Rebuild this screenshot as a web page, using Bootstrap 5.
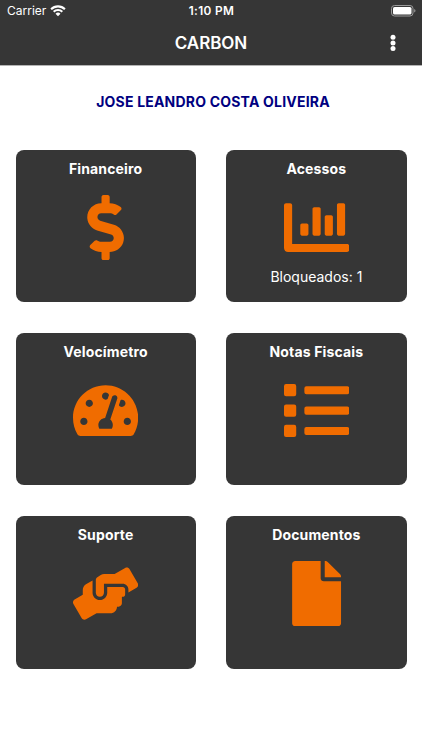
<!DOCTYPE html>
<html lang="pt-BR">
<head>
<meta charset="utf-8">
<meta name="viewport" content="width=device-width, initial-scale=1">
<title>CARBON</title>
<link href="https://cdn.jsdelivr.net/npm/bootstrap@5.3.0/dist/css/bootstrap.min.css" rel="stylesheet">
<style>
  body { font-family: Inter, "Liberation Sans", sans-serif; background: #fff; height: 750px; overflow: hidden; }
  .app-header { background: #363636; height: 66px; border-bottom: 1px solid #b4b4b4; }
  .status-bar { height: 22px; font-size: 12px; line-height: 22px; padding: 0 6px 0 7px; }
  .status-time { font-weight: 600; font-size: 11.8px; letter-spacing: .35px; }
  .title-bar { height: 42px; padding: 0 20px; }
  .app-title { font-size: 17px; font-weight: 600; line-height: 42px; letter-spacing: -.05px; }
  .user-name { color: #000080; font-size: 14px; font-weight: 700; line-height: 20px; letter-spacing: .2px; margin: 26px 0 37.5px; padding-left: 4px; }
  .tile-grid { padding: 0 15.5px; }
  .tiles { display: grid; grid-template-columns: 1fr 1fr; gap: 30.8px 30.6px; }
  .tile { background: #363636; border-radius: 8px; height: 152.5px; padding-top: 9px; }
  .tile-title { font-size: 14px; font-weight: 700; line-height: 20px; letter-spacing: .15px; margin-bottom: 16.2px; }
  .tile-icon { width: 65.2px; height: 65.2px; fill: #f06c00; }
  .tile-note { font-size: 14px; line-height: 20px; margin-top: 7.6px; }
</style>
</head>
<body>
<header class="app-header text-white">
  <div class="status-bar row g-0 align-items-center">
    <div class="col d-flex align-items-center gap-1">
      <span class="carrier">Carrier</span>
      <svg width="16" height="12" viewBox="0 0 16 12" fill="none" stroke="#fff" stroke-width="2.1">
        <path d="M1.1 4.2a9.8 9.8 0 0 1 13.8 0M3.7 6.8a6.1 6.1 0 0 1 8.6 0"/>
        <path d="M8 11.2 5.5 8.7a3.6 3.6 0 0 1 5 0z" fill="#fff" stroke="none"/>
      </svg>
    </div>
    <div class="col-auto status-time">1:10 PM</div>
    <div class="col d-flex justify-content-end">
      <svg width="26" height="12" viewBox="0 0 26 12">
        <rect x="1.5" y=".5" width="21.5" height="10.5" rx="3" fill="none" stroke="#999"/>
        <rect x="3" y="2" width="18.5" height="7.5" rx="1.6" fill="#fff"/>
        <path d="M24.2 4v3.6q1.3-.5 1.3-1.8T24.2 4z" fill="#999"/>
      </svg>
    </div>
  </div>
  <div class="title-bar row g-0 align-items-center">
    <div class="col"></div>
    <h1 class="app-title col-auto m-0">CARBON</h1>
    <div class="col d-flex justify-content-end">
      <svg width="18" height="18" viewBox="0 0 18 18" fill="#fff"><circle cx="9" cy="3.2" r="2.5"/><circle cx="9" cy="8.9" r="2.5"/><circle cx="9" cy="14.6" r="2.5"/></svg>
    </div>
  </div>
</header>
<main>
  <h2 class="user-name text-center">JOSE LEANDRO COSTA OLIVEIRA</h2>
  <div class="tile-grid">
    <div class="tiles text-white text-center">
      <section class="tile">
        <h3 class="tile-title">Financeiro</h3>
        <svg class="tile-icon" viewBox="0 0 288 512"><path d="M209.2 233.4l-108-31.6C88.7 198.2 80 186.5 80 173.5c0-16.3 13.2-29.5 29.5-29.5h66.3c12.2 0 24.2 3.7 34.2 10.5 6.1 4.1 14.3 3.1 19.5-2l34.8-34c7.1-6.9 6.1-18.4-1.8-24.5C238 74.8 207.4 64.1 176 64V16c0-8.8-7.2-16-16-16h-32c-8.8 0-16 7.2-16 16v48h-2.5C45.8 64-5.4 118.7.5 183.6c4.2 46.1 39.4 83.6 83.8 96.6l102.5 30c12.5 3.7 21.2 15.3 21.2 28.3 0 16.3-13.2 29.5-29.5 29.5h-66.3C100 368 88 364.3 78 357.5c-6.1-4.1-14.3-3.1-19.5 2l-34.8 34c-7.1 6.9-6.1 18.4 1.8 24.5 24.5 19.2 55.1 29.9 86.5 30v48c0 8.8 7.2 16 16 16h32c8.8 0 16-7.2 16-16v-48.2c46.6-.9 90.3-28.6 105.7-72.7 21.5-61.6-14.6-124.8-72.5-141.7z"/></svg>
      </section>
      <section class="tile">
        <h3 class="tile-title">Acessos</h3>
        <svg class="tile-icon" viewBox="0 0 512 512"><path d="M332.8 320h38.4c6.4 0 12.8-6.4 12.8-12.8V172.8c0-6.4-6.4-12.8-12.8-12.8h-38.4c-6.4 0-12.8 6.4-12.8 12.8v134.4c0 6.4 6.4 12.8 12.8 12.8zm96 0h38.4c6.4 0 12.8-6.4 12.8-12.8V76.8c0-6.4-6.4-12.8-12.8-12.8h-38.4c-6.4 0-12.8 6.4-12.8 12.8v230.4c0 6.4 6.4 12.8 12.8 12.8zm-288 0h38.4c6.4 0 12.8-6.4 12.8-12.8v-70.4c0-6.4-6.4-12.8-12.8-12.8h-38.4c-6.4 0-12.8 6.4-12.8 12.8v70.4c0 6.4 6.4 12.8 12.8 12.8zm96 0h38.4c6.4 0 12.8-6.4 12.8-12.8V108.8c0-6.4-6.4-12.8-12.8-12.8h-38.4c-6.4 0-12.8 6.4-12.8 12.8v198.4c0 6.4 6.4 12.8 12.8 12.8zM496 384H64V80c0-8.8-7.2-16-16-16H16C7.2 64 0 71.2 0 80v336c0 17.7 14.3 32 32 32h464c8.8 0 16-7.2 16-16v-32c0-8.8-7.2-16-16-16z"/></svg>
        <div class="tile-note">Bloqueados: 1</div>
      </section>
      <section class="tile">
        <h3 class="tile-title">Velocímetro</h3>
        <svg class="tile-icon" viewBox="0 0 576 512"><path d="M288 32C128.94 32 0 160.94 0 320c0 52.8 14.25 102.26 39.06 144.8 5.61 9.62 16.3 15.2 27.44 15.2h443c11.14 0 21.83-5.58 27.44-15.2C561.75 422.26 576 372.8 576 320c0-159.06-128.94-288-288-288zm0 64c14.71 0 26.58 10.13 30.32 23.65-1.11 2.26-2.64 4.23-3.45 6.67l-9.22 27.67c-5.13 3.49-10.97 6.01-17.64 6.01-17.67 0-32-14.33-32-32S270.33 96 288 96zM96 384c-17.67 0-32-14.33-32-32s14.33-32 32-32 32 14.33 32 32-14.33 32-32 32zm48-160c-17.67 0-32-14.33-32-32s14.33-32 32-32 32 14.33 32 32-14.33 32-32 32zm246.77-72.41l-61.33 184C343.13 347.33 352 364.54 352 384c0 11.72-3.38 22.55-8.88 32H232.88c-5.5-9.45-8.88-20.28-8.88-32 0-33.94 26.5-61.43 59.9-63.59l61.34-184.01c4.17-12.56 17.73-19.45 30.36-15.17 12.57 4.19 19.35 17.79 15.17 30.36zm14.66 57.2l15.52-46.55c3.47-1.29 7.13-2.23 11.05-2.23 17.67 0 32 14.33 32 32s-14.33 32-32 32c-11.38-.01-20.89-6.28-26.57-15.22zM480 384c-17.67 0-32-14.33-32-32s14.33-32 32-32 32 14.33 32 32-14.33 32-32 32z"/></svg>
      </section>
      <section class="tile">
        <h3 class="tile-title">Notas Fiscais</h3>
        <svg class="tile-icon" viewBox="0 0 512 512"><path d="M80 368H16a16 16 0 0 0-16 16v64a16 16 0 0 0 16 16h64a16 16 0 0 0 16-16v-64a16 16 0 0 0-16-16zm0-320H16A16 16 0 0 0 0 64v64a16 16 0 0 0 16 16h64a16 16 0 0 0 16-16V64a16 16 0 0 0-16-16zm0 160H16a16 16 0 0 0-16 16v64a16 16 0 0 0 16 16h64a16 16 0 0 0 16-16v-64a16 16 0 0 0-16-16zm416 176H176a16 16 0 0 0-16 16v32a16 16 0 0 0 16 16h320a16 16 0 0 0 16-16v-32a16 16 0 0 0-16-16zm0-320H176a16 16 0 0 0-16 16v32a16 16 0 0 0 16 16h320a16 16 0 0 0 16-16V80a16 16 0 0 0-16-16zm0 160H176a16 16 0 0 0-16 16v32a16 16 0 0 0 16 16h320a16 16 0 0 0 16-16v-32a16 16 0 0 0-16-16z"/></svg>
      </section>
      <section class="tile">
        <h3 class="tile-title">Suporte</h3>
        <svg class="tile-icon" viewBox="0 0 640 512"><path d="M488 192H336v56c0 39.7-32.3 72-72 72s-72-32.3-72-72V126.4l-64.9 39C107.8 176.9 96 197.8 96 220.2v47.3l-80 46.2C.7 322.5-4.6 342.1 4.3 357.4l80 138.6c8.8 15.3 28.4 20.5 43.7 11.7L231.4 448H368c35.3 0 64-28.7 64-64h16c17.7 0 32-14.3 32-32v-64h8c13.3 0 24-10.7 24-24v-48c0-13.3-10.7-24-24-24zm147.7-37.4L555.7 16C546.9.7 527.3-4.5 512 4.3L408.6 64H306.4c-12 0-23.7 3.4-33.9 9.7L239 94.6c-9.4 5.8-15 16.1-15 27.1V248c0 22.1 17.9 40 40 40s40-17.9 40-40v-88h184c30.9 0 56 25.1 56 56v28.5l80-46.2c15.3-8.9 20.5-28.4 11.7-43.7z"/></svg>
      </section>
      <section class="tile">
        <h3 class="tile-title">Documentos</h3>
        <svg class="tile-icon" viewBox="0 0 384 512"><path d="M224 136V0H24C10.7 0 0 10.7 0 24v464c0 13.3 10.7 24 24 24h336c13.3 0 24-10.7 24-24V160H248c-13.2 0-24-10.8-24-24zm160-14.1v6.1H256V0h6.1c6.4 0 12.5 2.5 17 7l97.9 98c4.5 4.5 7 10.6 7 16.9z"/></svg>
      </section>
    </div>
  </div>
</main>
<script src="https://cdn.jsdelivr.net/npm/bootstrap@5.3.0/dist/js/bootstrap.bundle.min.js"></script>
</body>
</html>
